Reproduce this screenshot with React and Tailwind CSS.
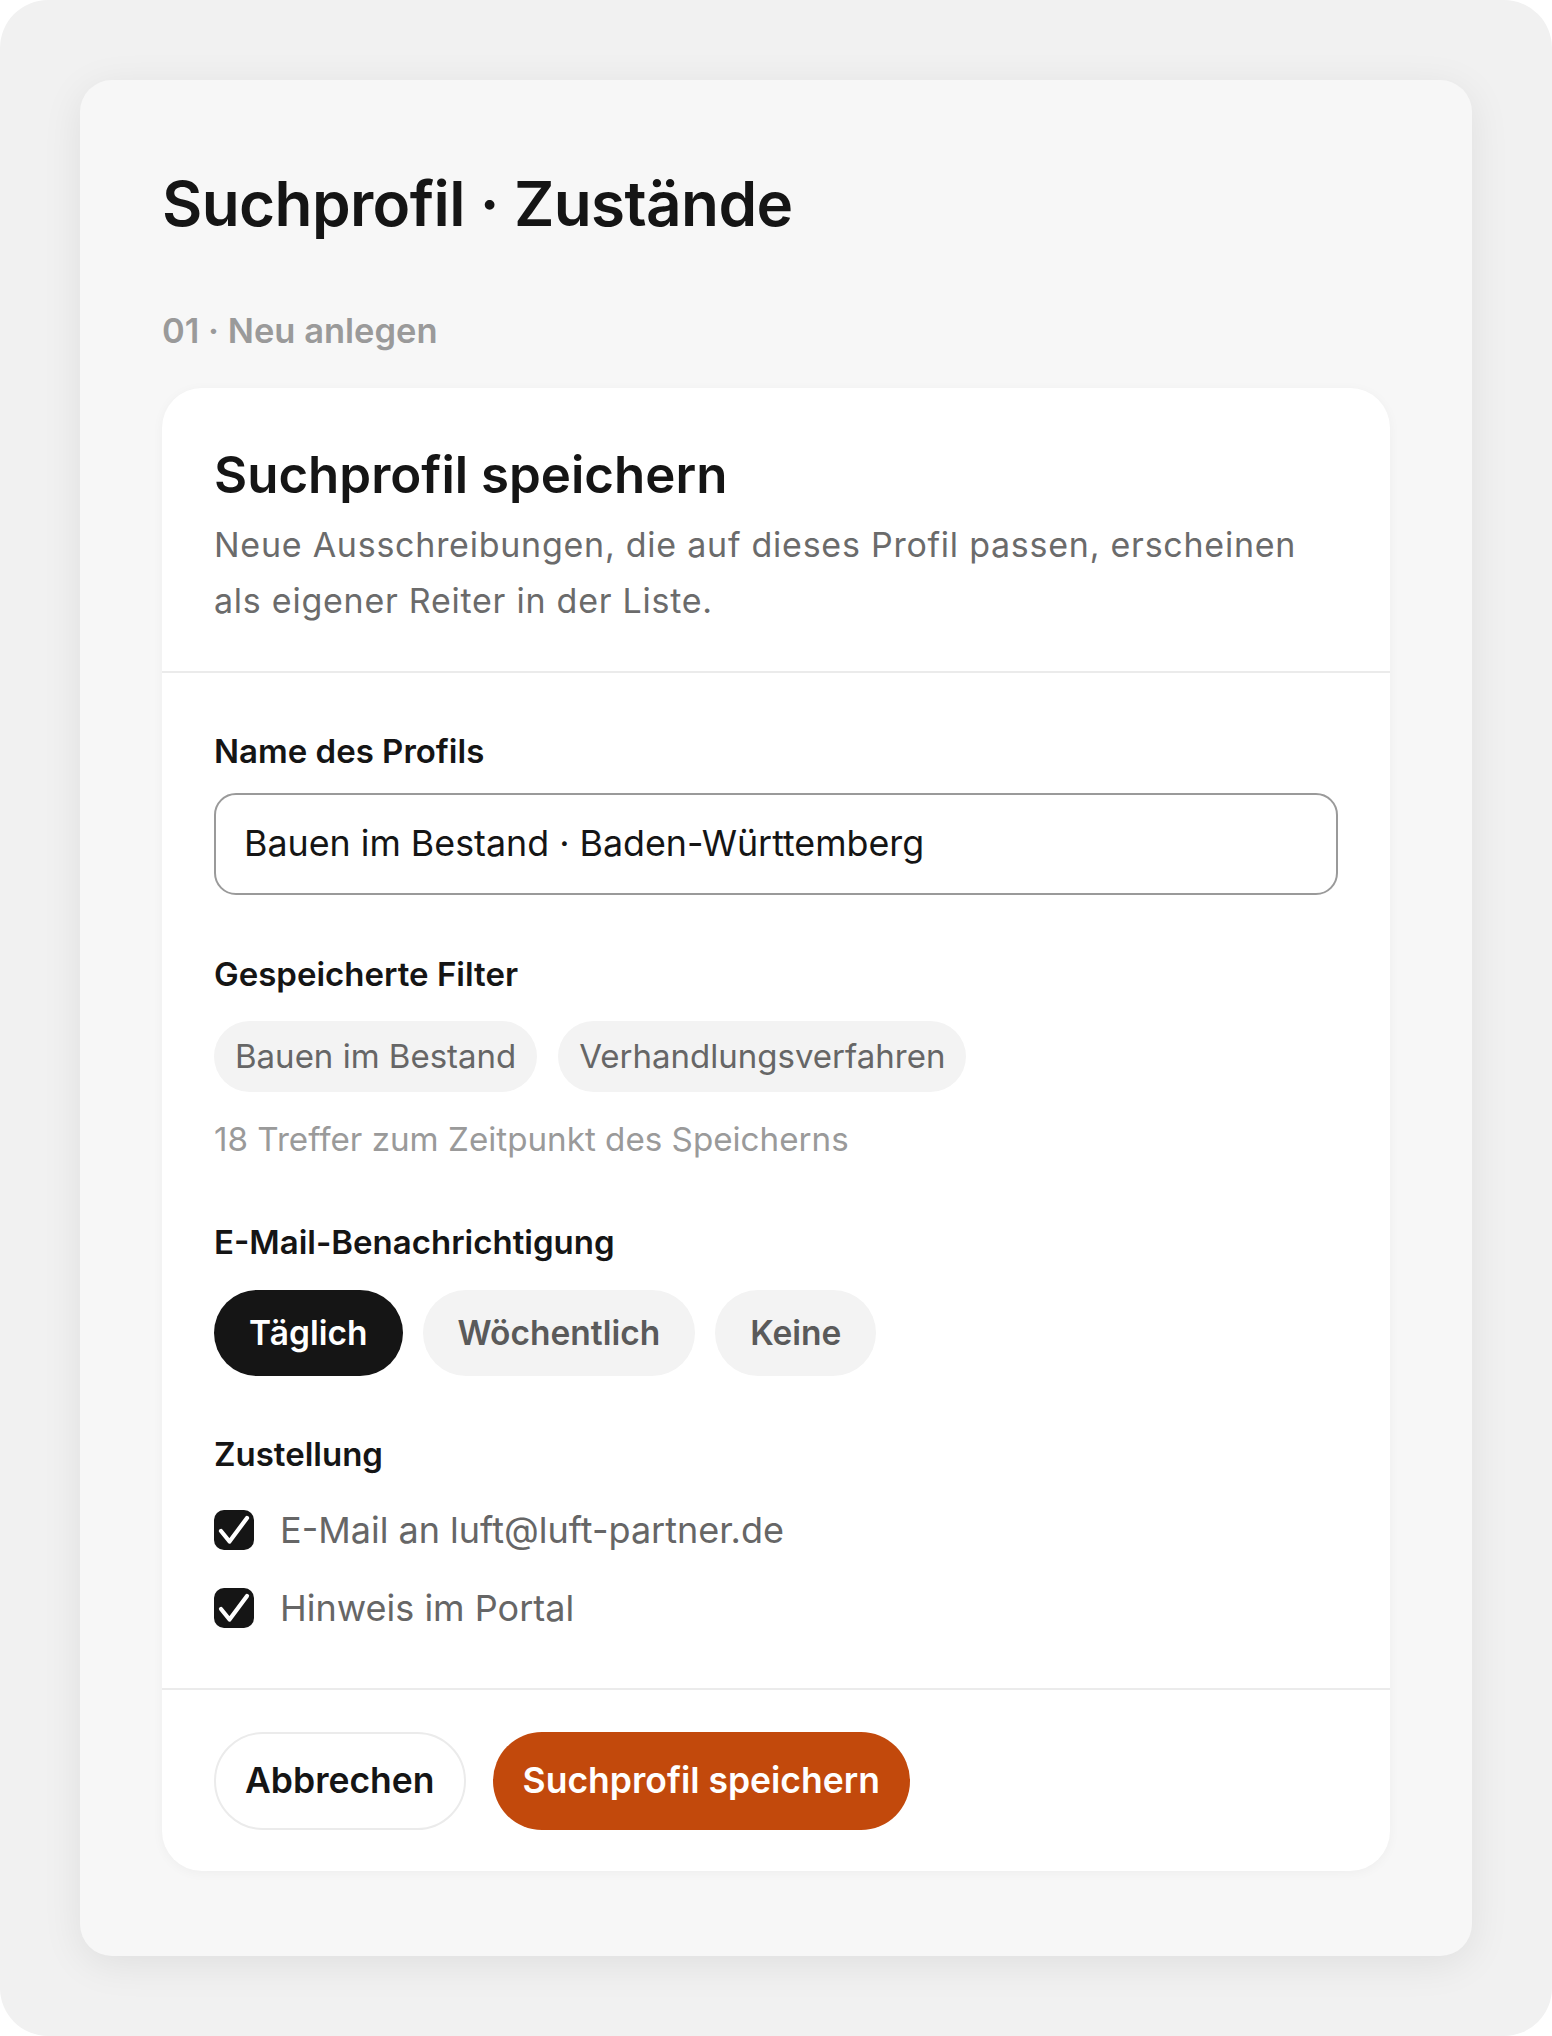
import React from "react"

const font = { fontFamily: "Inter, 'Noto Sans', sans-serif" }

function Check() {
  return (
    <span className="flex h-[40px] w-[40px] shrink-0 items-center justify-center rounded-[10px] bg-[#151515]">
      <svg viewBox="0 0 40 40" className="h-[40px] w-[40px]" fill="none" stroke="white" strokeWidth="4.2" strokeLinecap="round" strokeLinejoin="round">
        <path d="M7 21l8.5 10.5L33 8" />
      </svg>
    </span>
  )
}

function Label({ children }) {
  return <div className="text-[33px] leading-[40px] font-semibold text-[#151515]">{children}</div>
}

export default function App() {
  return (
    <div className="bg-white" style={font}>
      <div className="h-[2036px] rounded-[48px] bg-[#f1f1f1] p-[80px]">
        <div className="rounded-[32px] bg-[#f7f7f7] px-[82px] pt-[86px] pb-[85px] shadow-[0_8px_40px_rgba(0,0,0,0.08)]">
          <h1 className="text-[62px] leading-[76px] font-semibold tracking-[-0.01em] text-[#151515]">Suchprofil · Zustände</h1>
          <div className="mt-[67px] text-[34.5px] leading-[44px] font-semibold text-[#9a9a9a]">01 · Neu anlegen</div>

          <div className="mt-[35px] rounded-[40px] bg-white shadow-[0_2px_12px_rgba(0,0,0,0.04)]">
            <div className="border-b-2 border-[#ebebeb] px-[52px] pt-[57px] pb-[42px]">
              <h2 className="text-[51px] leading-[60px] font-semibold text-[#151515]">Suchprofil speichern</h2>
              <p className="mt-[12px] text-[34px] leading-[56px] tracking-[0.022em] text-[#6b6b6b]">
                Neue Ausschreibungen, die auf dieses Profil passen, erscheinen als eigener Reiter in der Liste.
              </p>
            </div>

            <div className="border-b-2 border-[#ebebeb] px-[52px] pt-[58px] pb-[56px]">
              <Label>Name des Profils</Label>
              <div className="mt-[22px] flex h-[102px] items-center rounded-[22px] border-2 border-[#9a9a9a] px-[28px] text-[35.8px] text-[#151515]">
                Bauen im Bestand · Baden-Württemberg
              </div>

              <div className="mt-[59px]">
                <Label>Gespeicherte Filter</Label>
              </div>
              <div className="mt-[27px] flex gap-[21px]">
                <span className="flex h-[71px] items-center rounded-full bg-[#f3f3f3] px-[21px] text-[33px] text-[#666]">Bauen im Bestand</span>
                <span className="flex h-[71px] items-center rounded-full bg-[#f3f3f3] px-[21px] text-[33px] text-[#666]">Verhandlungsverfahren</span>
              </div>
              <div className="mt-[27px] text-[33.2px] leading-[40px] text-[#9a9a9a]">18 Treffer zum Zeitpunkt des Speicherns</div>

              <div className="mt-[63px]">
                <Label>E-Mail-Benachrichtigung</Label>
              </div>
              <div className="mt-[28px] flex gap-[20px]">
                <button className="h-[86px] rounded-full bg-[#151515] px-[35px] text-[33.5px] font-semibold text-white">Täglich</button>
                <button className="h-[86px] rounded-full bg-[#f3f3f3] px-[35px] text-[33.5px] font-semibold text-[#5a5a5a]">Wöchentlich</button>
                <button className="h-[86px] rounded-full bg-[#f3f3f3] px-[35px] text-[33.5px] font-semibold text-[#5a5a5a]">Keine</button>
              </div>

              <div className="mt-[58px]">
                <Label>Zustellung</Label>
              </div>
              <div className="mt-[32px] flex flex-col gap-[30px]">
                <div className="flex h-[48px] items-center gap-[26px] text-[36px] text-[#666]">
                  <Check />
                  E-Mail an luft@luft-partner.de
                </div>
                <div className="flex h-[48px] items-center gap-[26px] text-[36px] text-[#666]">
                  <Check />
                  Hinweis im Portal
                </div>
              </div>
            </div>

            <div className="flex gap-[27px] px-[52px] pt-[42px] pb-[41px]">
              <button className="h-[98px] rounded-full border-2 border-[#ebebeb] bg-white px-[29px] text-[35.5px] font-semibold text-[#151515]">Abbrechen</button>
              <button className="h-[98px] rounded-full bg-[#c2490c] px-[30px] text-[35.5px] font-semibold text-white">Suchprofil speichern</button>
            </div>
          </div>
        </div>
      </div>
    </div>
  )
}
